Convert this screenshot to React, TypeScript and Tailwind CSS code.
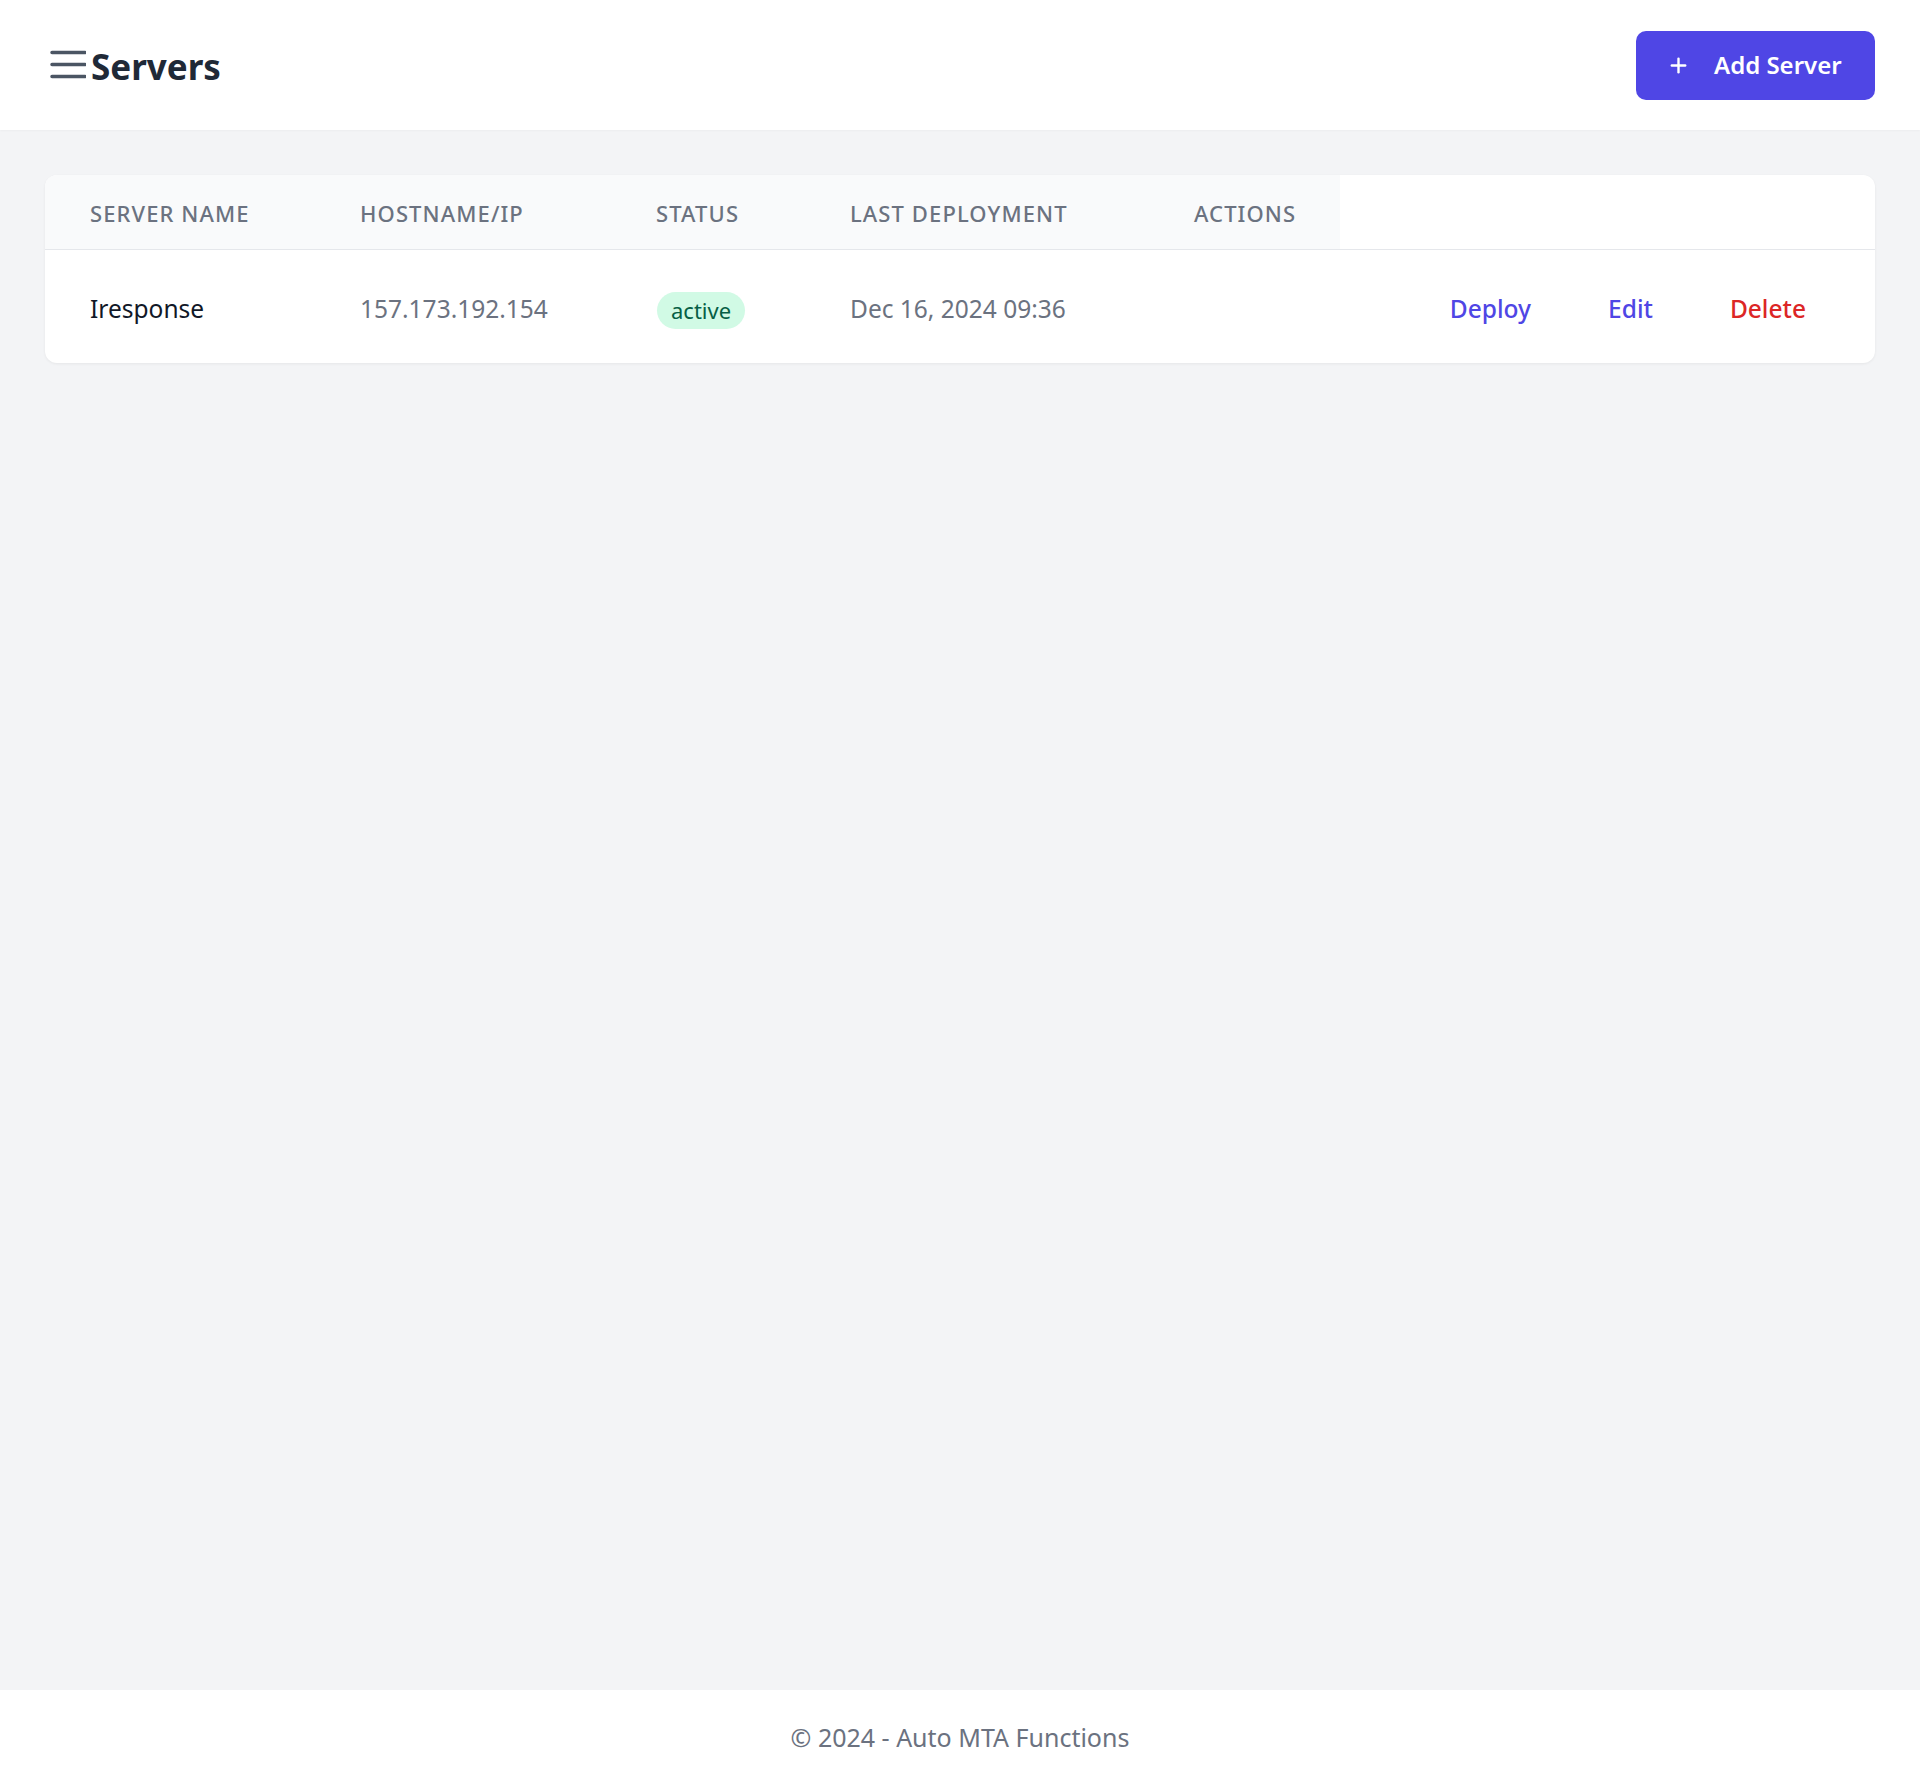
import { Plus } from "lucide-react";

const font = { fontFamily: '"Noto Sans", "Open Sans", sans-serif' };

const servers = [
  {
    id: 1,
    name: "Iresponse",
    host: "157.173.192.154",
    status: "active",
    lastDeploy: "Dec 16, 2024 09:36",
  },
];

function MenuIcon() {
  return (
    <svg width="36" height="30" viewBox="0 0 36 30" className="text-[#4b5563]" aria-hidden>
      <path
        d="M2 2.5h33M2 14.5h33M2 26.5h33"
        stroke="currentColor"
        strokeWidth="3.5"
        strokeLinecap="round"
      />
    </svg>
  );
}

export default function App() {
  return (
    <div className="min-h-screen flex flex-col bg-[#f3f4f6]" style={font}>
      <header className="h-[130px] bg-white flex items-center justify-between pl-[50px] pr-[45px] shadow-[0_1px_2px_rgba(0,0,0,0.03)]">
        <div className="flex items-center gap-[5px]">
          <MenuIcon />
          <h1 className="text-[35px] font-bold text-[#1f2937] leading-none pt-[2px]">Servers</h1>
        </div>
        <button className="h-[69px] w-[239px] flex items-center pl-[31px] gap-[24px] rounded-[10px] bg-[#4f46e5] text-white text-[24px] font-semibold">
          <Plus size={23} strokeWidth={2.5} />
          Add Server
        </button>
      </header>

      <main className="flex-1 px-[45px] pt-[45px]">
        <div className="bg-white rounded-[12px] shadow-[0_1px_3px_rgba(0,0,0,0.06)] overflow-hidden">
          <div className="flex h-[75px] border-b border-[#e5e7eb] text-[22px] font-medium uppercase tracking-wider text-[#6b7280]">
            <div className="w-[270px] bg-[#f9fafb] flex items-center pl-[45px] pt-[3px]">Server Name</div>
            <div className="w-[296px] bg-[#f9fafb] flex items-center pl-[45px] pt-[3px]">Hostname/IP</div>
            <div className="w-[194px] bg-[#f9fafb] flex items-center pl-[45px] pt-[3px]">Status</div>
            <div className="w-[344px] bg-[#f9fafb] flex items-center pl-[45px] pt-[3px]">Last Deployment</div>
            <div className="w-[191px] bg-[#f9fafb] flex items-center pl-[45px] pt-[3px]">Actions</div>
            <div className="flex-1" />
          </div>
          {servers.map((s) => (
            <div key={s.id} className="flex h-[113px] items-center text-[24.5px] pt-[5px]">
              <div className="w-[270px] pl-[45px] text-[#111827]">{s.name}</div>
              <div className="w-[296px] pl-[45px] text-[#6b7280]">{s.host}</div>
              <div className="w-[194px] pl-[46px] pt-[2px]">
                <span className="inline-flex items-center h-[37px] px-[14px] rounded-full bg-[#d1fae5] text-[#065f46] text-[22px]">
                  {s.status}
                </span>
              </div>
              <div className="w-[344px] pl-[45px] text-[#6b7280]">{s.lastDeploy}</div>
              <div className="flex-1 flex justify-end gap-[77px] pr-[69px] font-medium">
                <button className="text-[#4f46e5]">Deploy</button>
                <button className="text-[#4f46e5]">Edit</button>
                <button className="text-[#dc2626]">Delete</button>
              </div>
            </div>
          ))}
        </div>
      </main>

      <footer className="h-[95px] bg-white flex items-center justify-center text-[25px] text-[#6b7280]">
        © 2024 - Auto MTA Functions
      </footer>
    </div>
  );
}
